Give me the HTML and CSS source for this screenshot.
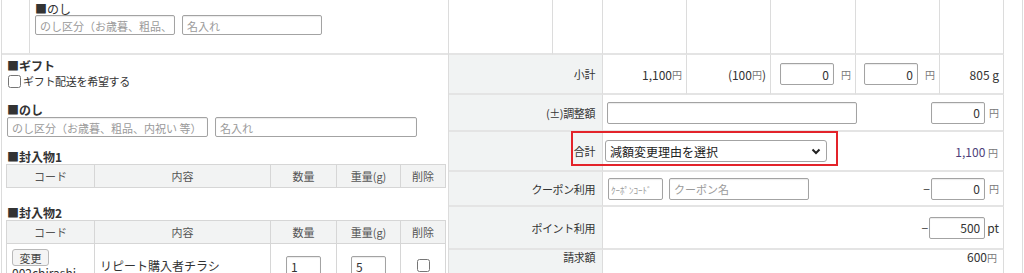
FILE: index.html
```html
<!DOCTYPE html>
<html lang="ja">
<head>
    <meta charset="UTF-8">
    <meta name="viewport" content="width=device-width, initial-scale=1.0">
    <title>受注編集</title>
    <link rel="stylesheet" href="styles.css">
</head>
<body>
<div class="page">
    <section class="left">
        <div class="noshi-top">
            <div class="noshi-top-side"></div>
            <div class="noshi-top-main">
                <p class="caption">■のし</p>
                <div class="field-row">
                    <input type="text" class="text-input w140" placeholder="のし区分（お歳暮、粗品、内祝い 等）">
                    <input type="text" class="text-input w140" placeholder="名入れ">
                </div>
            </div>
        </div>

        <div class="left-body">
            <h4 class="block-title gift-title">■ギフト</h4>
            <label class="check-label"><input type="checkbox">ギフト配送を希望する</label>

            <h4 class="block-title noshi-title">■のし</h4>
            <div class="field-row noshi-row">
                <input type="text" class="text-input w201" placeholder="のし区分（お歳暮、粗品、内祝い 等）">
                <input type="text" class="text-input w202" placeholder="名入れ">
            </div>

            <h4 class="block-title enc1-title">■封入物1</h4>
            <table class="enclosure">
                <colgroup>
                    <col style="width:88px"><col style="width:176px"><col style="width:66px"><col style="width:64px"><col style="width:45px">
                </colgroup>
                <tr>
                    <th>コード</th><th>内容</th><th>数量</th><th>重量(g)</th><th>削除</th>
                </tr>
            </table>

            <h4 class="block-title enc2-title">■封入物2</h4>
            <table class="enclosure">
                <colgroup>
                    <col style="width:88px"><col style="width:176px"><col style="width:66px"><col style="width:64px"><col style="width:45px">
                </colgroup>
                <tr>
                    <th>コード</th><th>内容</th><th>数量</th><th>重量(g)</th><th>削除</th>
                </tr>
                <tr>
                    <td class="code-cell">
                        <button type="button" class="small-btn">変更</button>
                        <div class="code-text">002chirashi</div>
                    </td>
                    <td class="name-cell">リピート購入者チラシ</td>
                    <td class="center"><input type="text" class="text-input qty" value="1"></td>
                    <td class="center"><input type="text" class="text-input qty" value="5"></td>
                    <td class="center"><input type="checkbox" class="del-check"></td>
                </tr>
            </table>
        </div>
    </section>

    <section class="right">
        <div class="summary">
            <div class="cell top"></div>
            <div class="cell top"></div>
            <div class="cell top"></div>
            <div class="cell top"></div>
            <div class="cell top"></div>
            <div class="cell top"></div>
            <div class="cell top"></div>

            <div class="cell label">小計</div>
            <div class="cell val">1,100<span class="yen">円</span></div>
            <div class="cell val">(100<span class="yen">円</span>)</div>
            <div class="cell val"><input type="text" class="text-input num w54" value="0"><span class="unit">円</span></div>
            <div class="cell val"><input type="text" class="text-input num w54" value="0"><span class="unit">円</span></div>
            <div class="cell val">805 g</div>

            <div class="cell label">(±)調整額</div>
            <div class="cell wide">
                <input type="text" class="text-input w250">
                <span class="amount"><input type="text" class="text-input num w54" value="0"><span class="unit tight">円</span></span>
            </div>

            <div class="cell label">合計</div>
            <div class="cell wide total-row">
                <span class="select-wrap">
                    <select class="reason-select">
                        <option>減額変更理由を選択</option>
                    </select>
                    <svg class="chevron" width="10" height="7" viewBox="0 0 10 7"><path d="M1.5 1.5 L5 5 L8.5 1.5" fill="none" stroke="#222" stroke-width="2"/></svg>
                </span>
                <span class="total">1,100 <span class="yen">円</span></span>
            </div>

            <div class="cell label">クーポン利用</div>
            <div class="cell wide">
                <span class="coupon">
                    <input type="text" class="text-input w55 coupon-code" placeholder="ｸｰﾎﾟﾝｺｰﾄﾞ">
                    <input type="text" class="text-input w140" placeholder="クーポン名">
                </span>
                <span class="amount"><span class="minus">−</span><input type="text" class="text-input num w54" value="0"><span class="unit tight">円</span></span>
            </div>

            <div class="cell label">ポイント利用</div>
            <div class="cell wide right-only">
                <span class="amount"><span class="minus">−</span><input type="text" class="text-input num w56" value="500"><span class="pt">pt</span></span>
            </div>

            <div class="cell label last">請求額</div>
            <div class="cell wide right-only last"><span class="bill">600<span class="yen">円</span></span></div>
        </div>
        <div class="highlight"></div>
    </section>
</div>
</body>
</html>
```

FILE: styles.css
```css
* {
  box-sizing: border-box;
}

body {
  margin: 0;
  font-family: "Noto Sans CJK JP", "Noto Sans", sans-serif;
  font-size: 11px;
  color: #333;
  background-color: #fff;
}

.page {
  display: flex;
  padding-left: 1px;
}

/* left column */

.left {
  width: 448px;
  border-left: 1px solid #dcdcdc;
  border-right: 1px solid #dcdcdc;
}

.noshi-top {
  display: flex;
  height: 55px;
  border-bottom: 2px solid #e4e4e4;
}

.noshi-top-side {
  width: 28px;
  border-right: 1px solid #dcdcdc;
}

.noshi-top-main {
  padding: 3px 0 0 5px;
}

.caption {
  margin: 0;
  font-size: 12px;
  line-height: 12px;
}

.field-row {
  display: flex;
  gap: 7px;
}

.text-input {
  height: 20px;
  padding: 0 4px;
  font-family: inherit;
  font-size: 12px;
  color: #333;
  border: 1px solid #a3a3a3;
  border-radius: 2px;
  box-shadow: inset 0 1px 1px rgba(0, 0, 0, 0.08);
  background-color: #fff;
}

.text-input::placeholder {
  font-size: 11px;
  color: #9a9a9a;
}

.w140 { width: 140px; }
.w201 { width: 201px; }
.w202 { width: 202px; }
.w250 { width: 250px; }
.w54 { width: 54px; }
.w55 { width: 55px; }
.w56 { width: 56px; }

.left-body {
  padding-left: 4px;
}

.block-title {
  margin: 0;
  font-size: 12px;
  font-weight: bold;
  line-height: 14px;
  padding-left: 1px;
}

.gift-title {
  margin-top: 3px;
  line-height: 16px;
}

.check-label {
  display: flex;
  align-items: center;
  height: 14px;
  font-size: 11px;
  line-height: 14px;
  letter-spacing: -0.3px;
}

.check-label input {
  width: 13px;
  height: 13px;
  margin: 0 2px 0 2px;
}

.noshi-title {
  margin-top: 15px;
}

.noshi-row {
  margin-left: 1px;
}

.enc1-title {
  margin-top: 13px;
}

.enc2-title {
  margin-top: 18px;
}

.enclosure {
  width: 439px;
  border-collapse: collapse;
  table-layout: fixed;
}

.enclosure th {
  height: 23px;
  padding: 0;
  font-weight: normal;
  color: #555;
  background-color: #f2f3f3;
  border: 1px solid #d6d6d6;
}

.enclosure td {
  height: 44px;
  padding: 0;
  border: 1px solid #d6d6d6;
  vertical-align: middle;
}

.code-cell {
  padding: 5px 0 0 5px !important;
  vertical-align: top !important;
}

.small-btn {
  width: 37px;
  height: 17px;
  padding: 0;
  font-family: inherit;
  font-size: 11px;
  color: #444;
  background-color: #f4f4f4;
  border: 1px solid #b9b9b9;
  border-radius: 3px;
}

.code-text {
  font-size: 12px;
  line-height: 14px;
}

.name-cell {
  padding-left: 5px !important;
  font-size: 12px;
}

.center {
  text-align: center;
}

.qty {
  width: 35px;
  height: 21px;
  margin-top: 2px;
}

.del-check {
  width: 13px;
  height: 13px;
  margin: 2px 0 0 0;
}

/* right column */

.right {
  position: relative;
  width: 574px;
  border-right: 1px solid #dcdcdc;
}

.summary {
  display: grid;
  width: 555px;
  grid-template-columns: 104px 50px 84px 84px 85px 84px 64px;
  grid-template-rows: 55px 40px 37px 40px 35px 43px 24px;
}

.cell {
  display: flex;
  align-items: center;
  justify-content: flex-end;
  border-right: 1px solid #dcdcdc;
  border-bottom: 2px solid #e4e4e4;
}

.cell.label {
  grid-column: span 2;
  padding-right: 7px;
  font-size: 11px;
  letter-spacing: -0.4px;
  background-color: #f1f3f3;
}

.cell.val {
  padding-right: 4px;
  font-size: 12px;
}

.cell.wide {
  grid-column: span 5;
  justify-content: space-between;
  padding: 0 4px 0 4px;
  font-size: 12px;
}

.cell.right-only {
  justify-content: flex-end;
}

.cell.last {
  align-items: flex-start;
  padding-top: 0;
  line-height: 14px;
  border-bottom: none;
}

.bill {
  padding-right: 2px;
}

.yen {
  font-size: 10px;
  color: #777;
}

.unit {
  margin-left: 7px;
  font-size: 10px;
  color: #777;
}

.unit.tight {
  margin-left: 4px;
}

.num {
  height: 22px;
  text-align: right;
}

.w250 {
  height: 22px;
}

.amount {
  display: flex;
  align-items: center;
}

.minus {
  margin-right: 1px;
  color: #444;
}

.pt {
  margin-left: 2px;
}

.total-row {
  padding-left: 2px !important;
  padding-right: 5px !important;
}

.select-wrap {
  position: relative;
  display: inline-block;
}

.reason-select {
  width: 222px;
  height: 22px;
  padding: 0 4px;
  font-family: inherit;
  font-size: 12px;
  color: #222;
  background-color: #fff;
  border: 1px solid #a3a3a3;
  border-radius: 3px;
  appearance: none;
  -webkit-appearance: none;
}

.chevron {
  position: absolute;
  right: 6px;
  top: 8px;
  pointer-events: none;
}

.total {
  color: #4d3f7a;
}

.coupon {
  display: flex;
  gap: 6px;
  margin-left: 1px;
}

.coupon-code {
  height: 22px;
  padding: 0 2px;
}

.coupon-code::placeholder {
  font-size: 9px;
}

.coupon .w140 {
  height: 22px;
}

.highlight {
  position: absolute;
  left: 122px;
  top: 131px;
  width: 267px;
  height: 35px;
  border: 2px solid #e3232a;
  pointer-events: none;
}
```
